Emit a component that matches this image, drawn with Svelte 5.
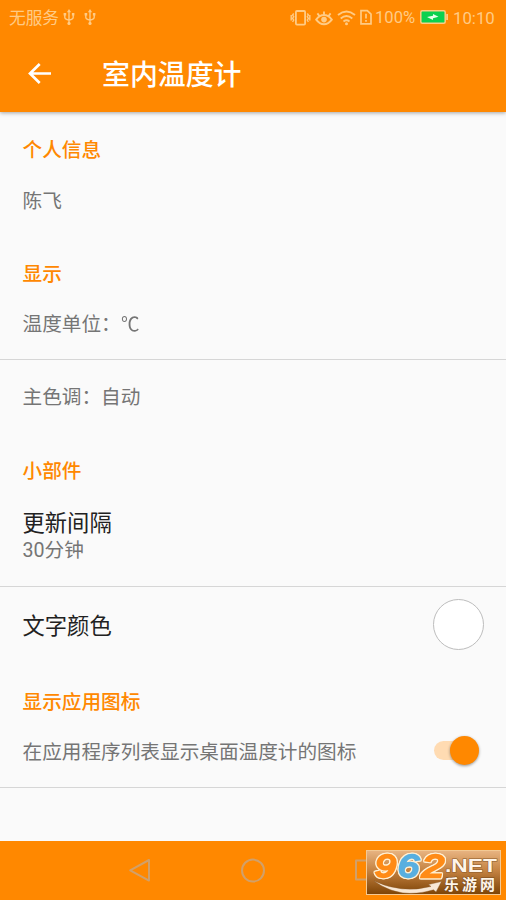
<script>
  let iconShown = $state(true);
</script>

<div class="screen">
  <header>
    <div class="status">
      <span class="carrier">无服务</span>
      {#each [0, 1] as n (n)}
        <svg class="usb" width="12" height="17" viewBox="0 0 12 17" fill="none" stroke="currentColor" stroke-width="1.4">
          <path d="M6 2v12M1.8 5v3.2q0 2 4.2 2.8M10.2 5v3.2q0 2-4.2 2.8" />
          <path d="M6 0l2.1 3.3H3.9zM.6 4h2.6v2.4H.6zM8.9 4h2.5v2.4H8.9z" fill="currentColor" stroke="none" />
          <circle cx="6" cy="14.4" r="1.6" fill="currentColor" stroke="none" />
        </svg>
      {/each}
      <span class="space"></span>
      <svg width="21" height="18" viewBox="0 0 21 18" fill="none" stroke="currentColor" stroke-width="1.8">
        <rect x="5.9" y="2" width="9.2" height="13.6" rx="1" />
        <path d="M3.7 4.5L2.6 6l1.1 1.7-1.1 1.7 1.1 1.6-1.1 1.8M1.2 6v5.5M17.3 4.5L18.4 6l-1.1 1.7 1.1 1.7-1.1 1.6 1.1 1.8M19.8 6v5.5" stroke-width="1.4" />
      </svg>
      <svg class="eye" width="18" height="18" viewBox="0 0 18 18" fill="none" stroke="currentColor" stroke-width="1.9">
        <path d="M1.2 10.6q3.4-4.6 7.8-4.6t7.8 4.6q-3.4 4.6-7.8 4.6t-7.8-4.6zM2.4 4.4l2 2.6M9 2.6v3.5M15.6 4.4l-2 2.6" />
        <circle cx="9" cy="10.6" r="2.8" fill="currentColor" stroke="none" />
      </svg>
      <svg class="wifi" width="19" height="16" viewBox="0 0 19 16" fill="none" stroke="currentColor" stroke-width="1.9">
        <path d="M1 4.9q8.5-6.6 17 0M3.7 8.4q5.8-4.6 11.6 0M6.5 11.4q3-2.2 6 0" />
        <circle cx="9.5" cy="13.8" r="1.5" fill="currentColor" stroke="none" />
      </svg>
      <svg class="sim" width="12" height="17" viewBox="0 0 12 17" fill="none" stroke="currentColor" stroke-width="1.7">
        <path d="M1 1.6h6.3L11 5.2v9.6H1zM6 4.8v4.8M6 11v1.8" />
      </svg>
      <span class="percent">100%</span>
      <svg class="battery" width="29" height="14" viewBox="0 0 29 14">
        <rect x=".8" y=".8" width="24.4" height="12.4" rx="1.5" fill="#0bd14f" stroke="#ffcb85" stroke-width="1.5" />
        <path d="M26.2 4h1.8v6h-1.8z" fill="#ffcb85" />
        <path d="M7 7l6-1.3V4l5.5 2.7L13 8.2V10z" fill="#e9ffe9" />
      </svg>
      <span class="clock">10:10</span>
    </div>
    <div class="toolbar">
      <svg width="24" height="22" viewBox="0 0 24 22" fill="none" stroke="#fff" stroke-width="2.7">
        <path d="M24 10.5H3M12.7 1L3 10.5l9.7 9.5" />
      </svg>
      <h1>室内温度计</h1>
    </div>
  </header>

  <main>
    <h2>个人信息</h2>
    <div class="item">陈飞</div>
    <h2>显示</h2>
    <div class="item line"><span>温度单位：<span class="unit">℃</span></span></div>
    <div class="item tall">主色调：自动</div>
    <h2>小部件</h2>
    <div class="item line double">
      <strong>更新间隔</strong>
      <span>30分钟</span>
    </div>
    <div class="item color">
      <strong>文字颜色</strong>
      <i class="swatch"></i>
    </div>
    <h2>显示应用图标</h2>
    <div class="item line">
      <span>在应用程序列表显示桌面温度计的图标</span>
      <button class="switch" class:on={iconShown} aria-label="显示应用图标" onclick={() => (iconShown = !iconShown)}><i></i></button>
    </div>
  </main>

  <nav>
    <svg width="24" height="26" viewBox="0 0 24 26"><path d="M21 2v20.6L2.2 12.3z" /></svg>
    <svg width="26" height="26" viewBox="0 0 26 26"><circle cx="13" cy="12.6" r="11" /></svg>
    <svg width="24" height="24" viewBox="0 0 24 24"><rect x="2" y="1.6" width="19" height="19" /></svg>
    <div class="badge">
      <svg width="135" height="45" viewBox="0 0 135 45">
        <defs>
          <linearGradient id="shade" x2="0" y2="1">
            <stop offset="0" stop-color="#e8b482" />
            <stop offset=".45" stop-color="#c58342" />
            <stop offset="1" stop-color="#7d4305" />
          </linearGradient>
        </defs>
        <rect x=".5" y=".5" width="134" height="44" fill="url(#shade)" stroke="#f3c994" />
        <path class="swoosh" d="M8 31Q36 44 65 36.5L62.5 34.5 75.5 31.5 70 42 67.5 39.8Q34 50 8 31z" />
        <g class="digits">
          <text x="9" y="26.5" textLength="21" lengthAdjust="spacingAndGlyphs" fill="#ff8b16" stroke="#ff8b16">9</text>
          <text x="32" y="26.5" textLength="21" lengthAdjust="spacingAndGlyphs" fill="#58afe0" stroke="#58afe0">6</text>
          <text x="56" y="26.5" textLength="22" lengthAdjust="spacingAndGlyphs" fill="#ff8b16" stroke="#ff8b16">2</text>
        </g>
        <text class="net" x="79" y="21.5" textLength="52" lengthAdjust="spacingAndGlyphs">.NET</text>
        <text class="site" x="78" y="40" textLength="51">乐游网</text>
      </svg>
    </div>
  </nav>
</div>

<style>
  :global(body) {
    margin: 0;
  }
  .screen {
    width: 506px;
    height: 900px;
    display: flex;
    flex-direction: column;
    overflow: hidden;
    background: #fafafa;
    color: #757575;
    font: 19.65px/30px Roboto, "Noto Sans CJK SC", sans-serif;
  }
  header {
    height: 112px;
    flex: none;
    background: #ff8800;
    box-shadow: 0 1px 4px rgba(0, 0, 0, 0.35);
    z-index: 1;
  }
  .status {
    height: 35px;
    padding: 0 11px 0 9px;
    display: flex;
    align-items: center;
    color: #ffcb85;
    font-size: 16.7px;
    line-height: 34px;
  }
  .carrier {
    padding-top: 2px;
  }
  .usb {
    margin-left: 4px;
  }
  .usb + .usb {
    margin-left: 9px;
  }
  .space {
    flex: 1;
  }
  .eye {
    margin-left: 4px;
  }
  .wifi {
    margin-left: 4px;
  }
  .sim {
    margin-left: 4px;
  }
  .percent {
    margin-left: 3px;
    width: 41px;
    white-space: nowrap;
    font-size: 16.6px;
  }
  .battery {
    margin: 0 4px 1px 4px;
  }
  .clock {
    width: 42px;
    font-size: 16.8px;
  }
  .toolbar {
    height: 77px;
    display: flex;
    align-items: center;
    padding: 0 0 0 27px;
  }
  .toolbar svg {
    margin-right: 51px;
  }
  h1 {
    margin: 5px 0 0;
    color: #fff;
    font-size: 27.9px;
    font-weight: 500;
    line-height: 40px;
  }
  main {
    flex: 1;
  }
  h2 {
    height: 28px;
    margin: 0;
    padding: 24px 22.5px 0;
    color: #ff8800;
    font-size: 19.65px;
    font-weight: 500;
    line-height: 30px;
  }
  .item {
    box-sizing: border-box;
    height: 72px;
    padding: 3px 22.5px 0;
    display: flex;
    align-items: center;
    justify-content: space-between;
  }
  .unit {
    display: inline-block;
    transform: scaleX(0.94);
    transform-origin: left;
  }
  .line {
    border-bottom: 1px solid #d6d6d6;
  }
  .tall {
    height: 73px;
  }
  .double {
    height: 102px;
    padding-top: 3px;
    flex-direction: column;
    align-items: flex-start;
    justify-content: center;
    line-height: 28px;
  }
  strong {
    color: #212121;
    font-size: 22.3px;
    font-weight: 400;
  }
  .color {
    height: 77px;
    padding-top: 1px;
  }
  .swatch {
    box-sizing: border-box;
    width: 51px;
    height: 51px;
    margin-bottom: 3px;
    border: 1px solid #bdbdbd;
    border-radius: 50%;
    background: #fff;
  }
  .switch {
    width: 42px;
    height: 19px;
    margin: 0 7.5px 5px 0;
    padding: 0;
    border: 0;
    border-radius: 10px;
    display: flex;
    align-items: center;
    background: #cccccc;
  }
  .switch i {
    width: 29px;
    height: 29px;
    flex: none;
    border-radius: 50%;
    background: #f1f1f1;
    box-shadow: 0 1px 3px rgba(0, 0, 0, 0.4);
  }
  .switch.on {
    background: #ffdbb2;
  }
  .switch.on i {
    margin-left: 16px;
    background: #ff8800;
  }
  nav {
    position: relative;
    height: 59px;
    flex: none;
    display: flex;
    align-items: center;
    gap: 88px;
    padding-left: 128px;
    background: #ff8800;
  }
  nav > svg {
    fill: none;
    stroke: #d1a06a;
    stroke-width: 2;
    stroke-linejoin: round;
  }
  .badge {
    position: absolute;
    right: 5px;
    bottom: 5px;
    width: 135px;
    height: 45px;
  }
  .swoosh {
    fill: #f8e8d6;
    stroke: #8b5b2b;
    stroke-width: 0.4;
  }
  .digits {
    font: italic 31px "Liberation Sans", sans-serif;
    stroke-width: 2.4px;
    filter: drop-shadow(1px 0 0 #fff0d4) drop-shadow(-1px 0 0 #fff0d4) drop-shadow(0 1px 0 #fff0d4) drop-shadow(0 -1px 0 #fff0d4);
  }
  .net {
    font: bold 17.5px "Liberation Sans", sans-serif;
    fill: #fff5e9;
    stroke: #8a5a2b;
    stroke-width: 1px;
    paint-order: stroke;
  }
  .site {
    font: bold 15px "Noto Sans CJK SC", sans-serif;
    fill: #fff5e9;
    stroke: #74491f;
    stroke-width: 1px;
    paint-order: stroke;
  }
</style>
